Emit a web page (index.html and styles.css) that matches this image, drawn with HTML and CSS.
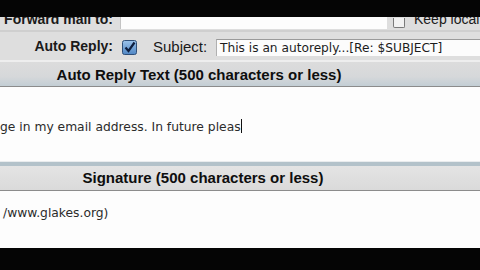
FILE: index.html
```html
<!DOCTYPE html>
<html>
<head>
<meta charset="utf-8">
<link rel="stylesheet" href="styles.css">
</head>
<body>
<div class="screen">
  <div class="blackbar top"></div>
  <div class="row forward">
    <div class="label clipped">Forward mail to:</div>
    <div class="field fwd-field"></div>
    <div class="box-unchecked"></div>
    <div class="keep clipped">Keep local copy</div>
  </div>
  <div class="row autoreply">
    <div class="label">Auto Reply:</div>
    <svg class="check" width="15" height="15" viewBox="0 0 15 15">
      <defs>
        <linearGradient id="cb" x1="0" y1="0" x2="0" y2="1">
          <stop offset="0" stop-color="#9cc3ea"/>
          <stop offset="1" stop-color="#4f86c4"/>
        </linearGradient>
      </defs>
      <rect x="0.5" y="0.5" width="14" height="14" rx="2" fill="url(#cb)" stroke="#2f4f78"/>
      <path d="M3.5 7.5 L6.5 11 L12.5 2.5" fill="none" stroke="#0d1e3e" stroke-width="2.2"/>
    </svg>
    <div class="subject">Subject:</div>
    <div class="field subj-field">This is an autoreply...[Re: $SUBJECT]</div>
  </div>
  <div class="panel-head first"><span>Auto Reply Text (500 characters or less)</span></div>
  <div class="textbox body-text">
    <div class="line">ge in my email address. In future pleas<span class="caret"></span></div>
  </div>
  <div class="panel-head second"><span>Signature (500 characters or less)</span></div>
  <div class="textbox sig-text">
    <div class="line">/www.glakes.org)</div>
  </div>
  <div class="blackbar bottom"></div>
</div>
</body>
</html>
```
FILE: styles.css
```css
html, body {
  margin: 0;
  padding: 0;
  background: #000;
}
.screen {
  width: 480px;
  height: 270px;
  overflow: hidden;
  display: flex;
  flex-direction: column;
  font-family: "Liberation Sans", Arial, sans-serif;
  background: #000;
}
.blackbar.top { height: 17px; flex: none; background: #050505; }
.blackbar.bottom { height: 22px; flex: none; background: #050505; }

.row {
  display: flex;
  flex: none;
  background: #dedede;
  overflow: hidden;
}
.row.forward {
  height: 13px;
  align-items: flex-start;
  border-bottom: 2px solid #cfcfcf;
}
.label {
  width: 113px;
  flex: none;
  text-align: right;
  font-weight: bold;
  font-size: 14px;
  color: #1a1a1a;
  white-space: nowrap;
}
.clipped {
  line-height: 14px;
  margin-top: -5px;
}
.fwd-field {
  width: 266px;
  height: 12px;
  margin-left: 7px;
  background: #fdfdfd;
  border-left: 1px solid #c4c4c4;
  flex: none;
}
.box-unchecked {
  width: 10px;
  height: 9px;
  margin-left: 6px;
  margin-top: 1px;
  flex: none;
  border: 1px solid #7a7a7a;
  border-top: none;
  background: #f2f2f2;
  border-radius: 0 0 2px 2px;
}
.keep {
  margin-left: 9px;
  font-size: 14px;
  color: #1a1a1a;
  white-space: nowrap;
}

.row.autoreply {
  height: 28px;
  align-items: center;
}
.check {
  flex: none;
  margin-left: 9px;
  margin-top: 2px;
}
.subject {
  margin-left: 16px;
  font-size: 15px;
  color: #1a1a1a;
  width: 63px;
  flex: none;
}
.field.subj-field {
  flex: none;
  width: 280px;
  height: 16px;
  margin-top: 3px;
  background: #fcfcfc;
  border-top: 1px solid #9a9a9a;
  border-left: 1px solid #b0b0b0;
  font-family: "DejaVu Sans", Verdana, sans-serif;
  font-size: 12.2px;
  line-height: 16px;
  padding-left: 3px;
  color: #1c1c1c;
  white-space: nowrap;
}

.panel-head {
  flex: none;
  display: flex;
  justify-content: center;
  margin-left: -90px;
  width: 578px;
  background: linear-gradient(#dcdcdc, #d6d8da 60%, #c3ced5);
  border-bottom: 1px solid #8c8c8c;
  font-weight: bold;
  font-size: 15px;
  color: #0e0e0e;
}
.panel-head.first {
  height: 24px;
  line-height: 25px;
  border-top: 2px solid #eeeeee;
}
.panel-head.second {
  height: 24px;
  line-height: 24px;
  border-top: 4px solid #b3c2ca;
  background: linear-gradient(#e4e4e4, #dadada);
}
.panel-head.second span { padding-left: 8px; }

.textbox {
  flex: none;
  background: #fdfdfd;
  font-family: "DejaVu Sans", Verdana, sans-serif;
  font-size: 12.3px;
  color: #2b2b2b;
  white-space: nowrap;
  overflow: hidden;
}
.body-text {
  height: 74px;
  border-bottom: 1px solid #e9ecee;
}
.body-text .line { padding-top: 32px; }
.caret {
  display: inline-block;
  width: 1px;
  height: 14px;
  background: #111;
  vertical-align: -2px;
}
.sig-text {
  height: 57px;
}
.sig-text .line { padding-top: 15px; padding-left: 3px; }
```
